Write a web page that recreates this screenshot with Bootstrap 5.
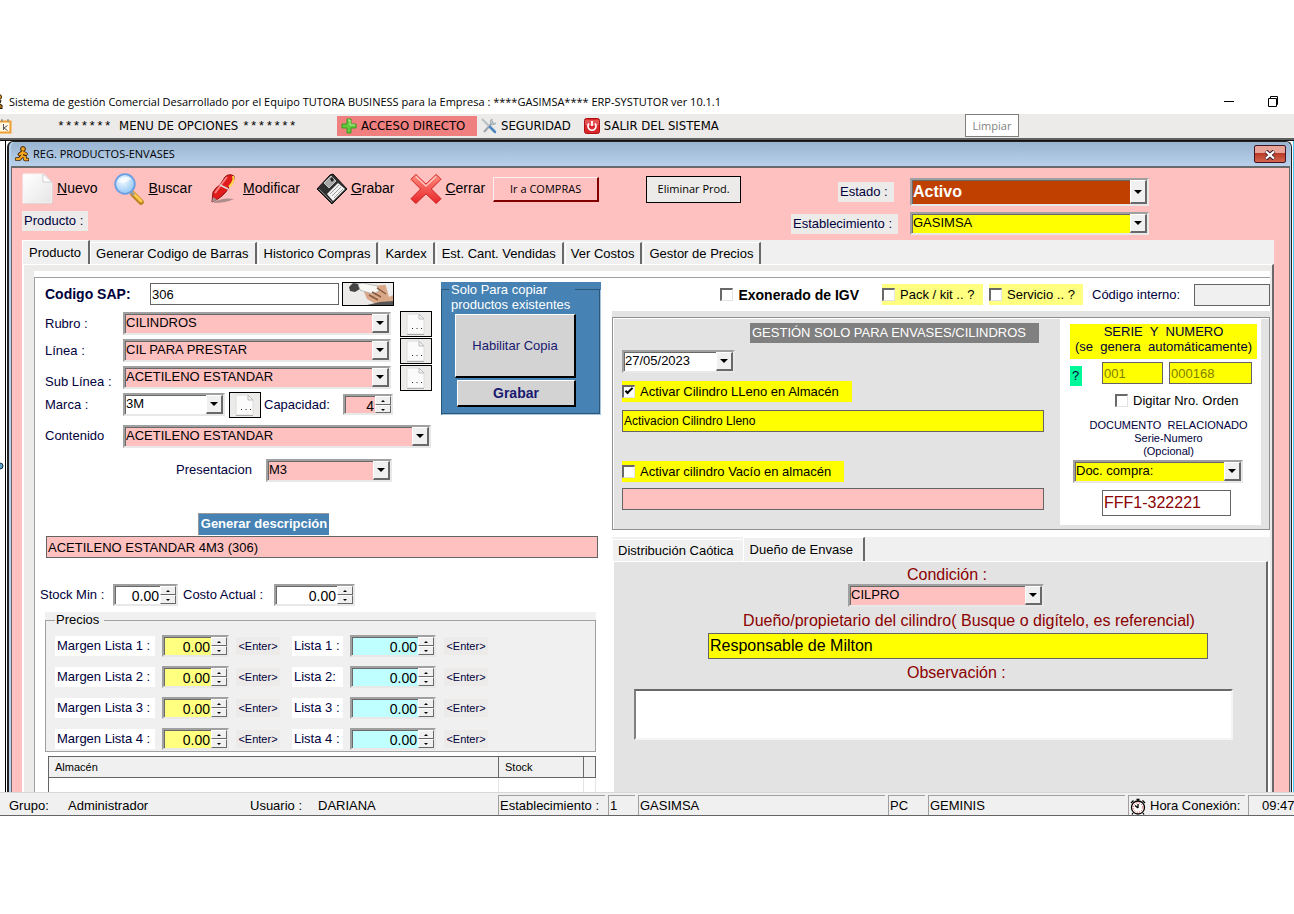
<!DOCTYPE html>
<html lang="es">
<head>
<meta charset="utf-8">
<meta name="viewport" content="width=device-width, initial-scale=1">
<title>ERP-SYSTUTOR - REG. PRODUCTOS-ENVASES</title>
<link href="https://cdn.jsdelivr.net/npm/bootstrap@5.3.0/dist/css/bootstrap.min.css" rel="stylesheet">
<style>
:root{--rosa:#ffc0c0;--gris:#f0f0f0;--plomo:#e3e3e3;--azul:#4682b4;--tinta:#00003c}
body{font:13px/20px "Liberation Sans",Arial,sans-serif;color:#000;background:#fff;padding-top:92px;overflow-x:hidden}
label,.lbl{color:var(--tinta);white-space:nowrap}
button,input,select,textarea{font:inherit;color:inherit;border-radius:0}
.f11{font-size:11px}.f12{font-size:12px}.f14{font-size:14px}.f16{font-size:16px}
.bg-rosa{background-color:var(--rosa)!important}
.bg-am{background-color:#ff0!important}
.bg-amc{background-color:#ffff80!important}
.bg-cel{background-color:#c0ffff!important}
.bg-ladrillo{background-color:#c04000!important}
.rojo,.rojo label{color:#8b0000}

/* application title and menu */
.ui{font-family:"Open Sans","Segoe UI",sans-serif;font-size:11px}
.titlebar{height:20px;line-height:20px}
.appicon{margin-left:-3px}
.menubar{height:26px;background:#ecebe9;border-bottom:2px solid #606060;margin-top:2px;font:13px/24px "DejaVu Sans Condensed",Tahoma,sans-serif}
.menubar a{color:#000;text-decoration:none;white-space:nowrap;height:24px}
.menuicon{margin-right:45px}
.opciones{width:280px}
.opciones span{font-family:"Liberation Mono",monospace}
.acceso{background:#f08080;width:140px;padding-left:4px;border:solid #ecebe9;border-width:2px 0}
.salir{margin-left:13px}
.limpiar{position:absolute;right:275px;top:0;width:54px;height:23px;line-height:20px;border:1px solid #7f7f7f;background:#fff;color:#838383;padding:0}

/* MDI window */
.mdi{border-top:1px solid #111;box-shadow:inset -1px 0 #45c8f5}
.strip{width:6px;border-right:1px solid #000}
.win{margin:0 2px 0 1px;border:solid #222;border-width:1px 1px 0 2px;border-radius:6px 6px 0 0;background:#b9d1ea;padding:0 1px 0 2px}
.caption{height:24px;background:linear-gradient(#99b4d1,#b9d1ea);line-height:24px;border-radius:5px 5px 0 0}
.closer{width:32px;height:18px;border:1px solid #431422;border-radius:2px;background:linear-gradient(#e9a49a 0 45%,#b83a26 46%,#d4664f);padding:0;line-height:1}
.body-win{background:var(--rosa);border:solid #696969;border-width:2px 1px 0 1px;padding:0 8px 0 10px}
.head{height:72px;padding-right:132px}
.bar{padding-top:2px;height:40px}
.tool{border:0;background:none;padding:0;font-size:14px;height:34px}
.tool svg{margin-right:3px}
.tool+.tool{margin-left:16px}
.compras{width:106px;height:25px;background:var(--rosa);border:solid;border-width:1px 2px 2px 1px;border-color:#fff0f0 #800000 #800000 #fff0f0;padding:0;line-height:16px;margin-left:8px}
.eliminar{width:95px;height:27px;border:1px solid #000;background:#ecebe9;padding:0;margin-left:47px}
.chip{background:#ecebe9;height:20px;line-height:19px;padding:0 2px;white-space:nowrap;display:inline-block}
.prod{margin-top:3px;width:66px}
.estado{display:grid;grid-template-columns:107px 239px;column-gap:12px;row-gap:6px;align-content:start;padding-top:10px;align-items:center}
.e1{justify-self:end;width:56px;margin-right:4px}

/* sunken fields, combos and spinners */
.deep{position:relative;border:2px solid;border-color:#a0a0a0 #e8e8e8 #e8e8e8 #a0a0a0;height:23px;background:#fff;box-shadow:inset 1px 1px #696969;display:block}
.deep select,.deep input{appearance:none;border:0;background:transparent;width:100%;height:100%;padding:0 18px 1px 1px;display:block;outline:0;line-height:16px}
.deep input{text-align:right;padding:2px 17px 0 0;font-size:14px}
.big{height:28px}
.drop{position:absolute;right:0;top:0;bottom:0;width:17px;background:var(--gris);border:solid;border-width:1px 2px 2px 1px;border-color:#fff #696969 #696969 #fff;pointer-events:none}
.drop::before{content:"";position:absolute;left:3px;top:calc(50% - 2px);border:solid transparent;border-width:4px 4px 0;border-top-color:#000}
.spin{position:absolute;right:0;top:0;bottom:0;width:16px;display:flex;flex-direction:column}
.spin button{flex:1;padding:0;background:var(--gris);border:1px solid;border-color:#fff #696969 #696969 #fff;position:relative;min-height:0}
.spin button::before{content:"";position:absolute;left:5px;top:3px;border:solid transparent;border-width:0 2px 2px;border-bottom-color:#000}
.spin button+button::before{border-width:2px 2px 0;border-top-color:#000}
.flat{border:1px solid #646464;height:22px;padding:0 1px;outline:0;line-height:18px;background:#fff}
input.ck{appearance:none;width:13px;height:13px;flex:none;background:#fff;border:solid;border-width:2px 1px 1px 2px;border-color:#696969 #e3e3e3 #e3e3e3 #696969;position:relative}
.ck:checked::after{content:"";position:absolute;left:1px;top:1px;width:8px;height:4px;border:solid #000;border-width:0 0 2px 2px;transform:rotate(-45deg)}
.opt{height:21px;display:inline-flex;align-items:center;gap:5px;color:#000}

/* tabs */
.outer{margin-right:7px}
.tabs{background:var(--gris);height:24px;align-items:flex-end}
.tabs button{border:0;background:var(--gris);height:22px;line-height:20px;padding:0 6px 0 5px;white-space:nowrap;border-left:1px solid #fff;border-top:1px solid #fff;border-right:2px solid #696969;margin-right:1px}
.tabs button.on{height:24px;padding:0 7px 0 6px;margin-right:0;line-height:20px}
.tabs2{margin-top:7px}
.tabs2 button:first-child{border-right:0;padding-right:8px}
.tabs2 button.on{padding-right:10px}
.tabpage{background:#ecebe9;border-left:2px solid #fff;border-right:2px solid #696969;border-top:1px solid #fff;padding:6px 2px 0 10px}
.sheet{background:#fff;padding-top:6px}
.framed{border-top:1px solid #a0a0a0;border-left:1px solid #a0a0a0}

/* left column: product data */
.colA{width:566px;flex:none}
.frm{width:397px;padding-left:10px}
.r27{height:27px}.r32{height:32px}.r36{height:36px;width:386px}
.w-lab{width:78px;flex:none}
.wsap{width:105px;flex:none}.wcod{width:189px}
.wmar{width:102px;flex:none}.wcap{width:82px;padding-left:3px;flex:none}.wcapn{width:50px;height:21px}
.wpre{width:221px;padding-left:131px;flex:none}.wpres{width:126px}
.scan{width:52px;height:24px;border:1px solid #000;background:#ecebe9;padding:0;line-height:0;margin-left:3px}
.pg{width:32px;height:26px;border:1px solid #000;background:#ecebe9;padding:0;line-height:0;margin-left:9px;flex:none}
.copia{width:160px;height:133px;background:var(--azul);color:#fff;margin:4px 0 0 9px;padding:7px 1px 0 0}
.copia fieldset{border:1px solid #2b5678;box-shadow:1px 1px #a9c6e0;height:125px;padding:0 0 0 13px}
.copia legend{float:left;font-size:13px;line-height:15px;width:126px;margin:-8px 0 2px -6px;padding:0 0 0 2px;background:var(--azul);white-space:nowrap}
.copia button{background:#d3d3d3;border:solid;border-width:1px 2px 2px 1px;border-color:#fff #000 #000 #fff;color:#191970;display:block;padding:0;clear:both}
.copia .hab{width:121px;height:64px}
.copia .gra{width:119px;height:27px;margin:2px 0 0 2px;font-weight:700;font-size:14px}
.desc{padding:27px 3px 0 11px}
.gendesc{display:block;margin:0 0 1px 152px;width:131px;height:22px;border:solid #9a9a9a;border-width:1px 0 0 1px;background:var(--azul);color:#fff;font-weight:700;line-height:17px;padding:0 0 3px;white-space:nowrap}
.stock{padding:26px 0 0 5px}.stock .deep{height:22px}
.wst{width:73px}.wsn{width:65px}.wca{width:96px;padding-left:5px}.wcn{width:81px}
.precios{background:var(--gris);width:551px;margin:6px 0 0 10px}
.precios fieldset{border:1px solid #a0a0a0;padding:0 9px;height:140px}
.precios legend{float:none;width:auto;font-size:13px;line-height:16px;margin:0 0 7px;padding:0 5px 0 1px}
.plist>div{margin-bottom:9px;height:22px}.plist .deep{height:22px;flex:none}
.tag{background:#fff;height:20px;padding-left:2px;flex:none}
.ent{width:44px;height:18px;background:#ecebe9;border:0;color:var(--tinta);line-height:16px;padding:0}
.wm{width:100px;margin-right:7px}.wn{width:67px}.ea{margin:0 12px 0 7px}.wl{width:51px;margin-right:7px}.wc{width:86px}.eb{margin-left:8px}
.grilla{width:548px;margin:4px 0 0 13px;border:solid #646464;border-width:1px 1px 0;font:11px/20px "Liberation Sans",Arial,sans-serif;border-collapse:collapse;table-layout:fixed}
.grilla th{background:var(--gris);font-weight:400;border-right:1px solid #696969;border-bottom:1px solid #646464;padding:0 6px;height:19px}
.grilla td{height:14px;border-right:1px solid #e4e4e4;padding:0}
.c1{width:450px}.c2{width:85px}

/* right column: cylinders */
.colB{padding-left:11px}
.toprow{height:33px}
.exo{margin-right:23px}.pak{width:101px;margin-right:6px}.srv{width:94px;margin-right:9px}.cin{width:102px}.wint{width:76px;background:var(--gris)}
.gbox{background:var(--plomo);padding-top:6px}
.rim{border:1px solid #909090;box-shadow:inset 1px 1px #fff;padding:0 8px 4px 9px}
.izq{padding:5px 16px 0 0}
.gestion{background:#808080;color:#fff;line-height:19px;height:20px;width:289px;padding-left:2px;white-space:nowrap;margin-right:5px}
.fecha{width:113px;margin:7px 0 8px}.act{width:230px}.vac{width:222px}.t1{margin:6px 0 29px}.t2{margin-top:4px}
.serie{background:#fff;width:201px;height:207px;padding:6px 4px 0 10px}
.syn{height:35px;line-height:15px}.sn{padding-top:3px}
.qm{width:12px;height:20px;background:#00fa9a;margin:4px 20px 0 0;padding-left:2px}
.s1{width:61px;margin-right:6px;color:#808000}.s2{width:83px;color:#808000}
.dig{margin:4px 0 0 45px}.dr{line-height:13px;margin:6px 0 2px 10px}.docs{width:170px;margin-left:3px}.fff{width:129px;height:26px;margin:7px 0 0 32px}
.dueno{background:var(--plomo);border:solid;border-width:1px 2px 0;border-color:#fff #696969 #fff #fff;margin-right:2px}
.lc{padding:4px 0 0 293px;line-height:18px}.cond{width:196px;margin-left:234px;font-size:13px}
.ld{padding:3px 0 0 58px;line-height:22px}.due{width:500px;height:26px;margin:1px 0 0 94px;display:block}
.lo{padding:4px 0 0 293px}
.obs{width:599px;height:51px;margin:6px 0 0 20px;border:2px solid;border-color:#696969 #f4f4f4 #f4f4f4 #808080;display:block;background:#fff;resize:none;outline:0;padding:2px}

/* status bar */
.status{background:var(--gris);border-top:1px solid #d8d8d8;border-bottom:1px solid #646464;height:24px;line-height:19px;white-space:nowrap;overflow:hidden}
.status>span{margin-top:3px}
.status .cell{border:solid #a0a0a0;border-width:1px 0 0 1px;height:20px;padding-left:1px;margin:2px 3px 0 0;flex:none}
.s-a{padding-left:9px;width:68px}.s-b{width:182px}.s-c{width:68px}
.k1{width:107px}.k2{width:27px}.k3{width:247px}.k4{width:37px}.k5{width:197px}.k6{width:117px}
.status .k7{width:46px;padding-left:13px;margin-right:0}
</style>
</head>
<body>
<svg width="0" height="0" class="position-absolute" aria-hidden="true">
<defs>
<linearGradient id="gp" x1="0" y1="0" x2="1" y2="1"><stop offset="0" stop-color="#fff"/><stop offset="1" stop-color="#e6e6e6"/></linearGradient>
<radialGradient id="gl" cx=".4" cy=".35" r=".7"><stop offset="0" stop-color="#f2faff"/><stop offset="1" stop-color="#8fc4f4"/></radialGradient>
<linearGradient id="gr" x1="0" y1="0" x2="0" y2="1"><stop offset="0" stop-color="#ff8a7c"/><stop offset="1" stop-color="#e8252a"/></linearGradient>
<symbol id="runner" viewBox="0 0 14 16"><g stroke="#3a1c00" stroke-width="3.600" fill="none" stroke-linecap="round" stroke-linejoin="round"><path d="M7.500 6L7 10L10 11V13.500H12.500M7 10L4.500 13H1.500M7 6.500L4.500 8.500M8 6.500L11 8"/></g><circle cx="8" cy="3" r="2.400" fill="#f5a623" stroke="#3a1c00"/><g stroke="#f5a623" stroke-width="2" fill="none" stroke-linecap="round" stroke-linejoin="round"><path d="M7.500 6L7 10L10 11V13.500H12.500M7 10L4.500 13H1.500M7 6.500L4.500 8.500M8 6.500L11 8"/></g></symbol>
<symbol id="hoja" viewBox="0 0 32 32"><path d="M2 2H23L31 10V31H2Z" fill="#b9a4a4" opacity=".6"/><path d="M1 1H22L30 9V30H1Z" fill="url(#gp)" stroke="#f5f5f5"/><path d="M21 1V9H30Z" fill="#fff" stroke="#d0d0d0"/></symbol>
<symbol id="mini" viewBox="0 0 30 24"><path d="M6 2H18L23 7V22H6Z" fill="#fbfbfb" stroke="#dcdcdc"/><path d="M18 2V7H23Z" fill="#f3f3f3" stroke="#bdbdbd"/><path d="M6 22.500H23" stroke="#aaa"/><path d="M11 16.500H12M15.500 16.500H16.500M20 16.500H21" stroke="#3a2a1a"/></symbol>
</defs>
</svg>

<header class="titlebar ui d-flex align-items-center">
  <svg width="8" height="16" viewBox="6 0 8 16" class="appicon me-1 flex-shrink-0"><path d="M5 6L10 8M6 10L10 12V15" fill="none" stroke="#2a1a00" stroke-width="3"/><path d="M5 6L9 8M6 10L10 12V14" fill="none" stroke="#f5a623"/><circle cx="8" cy="3" r="2.500" fill="#f5a623" stroke="#2a1a00"/></svg>
  <span class="text-nowrap">Sistema de gestión Comercial Desarrollado por el Equipo TUTORA BUSINESS para la Empresa : ****GASIMSA**** ERP-SYSTUTOR ver 10.1.1</span>
  <svg class="ms-auto me-3 flex-shrink-0" width="56" height="14" viewBox="0 0 56 14" fill="none" stroke="#000"><path d="M2 6.500H12"/><path d="M46.500 3.500H54.500V11.500H46.500ZM48.500 3V1.500H55.500V9.500H55"/></svg>
</header>

<nav class="menubar d-flex align-items-start position-relative">
  <svg width="12" height="16" viewBox="0 0 12 16" class="menuicon mt-1 flex-shrink-0"><path d="M-3 3.500H10.500V14.500H-3Z" fill="#fff7e0" stroke="#f0a030" stroke-width="2"/><path d="M3.500 6V12M7.500 7.500L4 10L7.500 12.500" fill="none" stroke="#556"/><path d="M2 1V4M8 1V4" stroke="#777"/></svg>
  <a href="#" class="opciones"><span>*******</span>&nbsp; MENU DE OPCIONES <span>*******</span></a>
  <a href="#" class="acceso d-flex align-items-center flex-shrink-0"><svg width="16" height="16" viewBox="0 0 16 16" class="me-1"><path d="M6 1H10V6H15V10H10V15H6V10H1V6H6Z" fill="#62c83c" stroke="#3b9a20"/><path d="M7 2H9V7H14" fill="none" stroke="#b6f29a"/></svg>ACCESO DIRECTO</a>
  <a href="#" class="d-flex align-items-center ms-1"><svg width="16" height="16" viewBox="0 0 16 16" class="me-1"><path d="M3 14L12 4" stroke="#9aa4ad" stroke-width="2"/><path d="M11 1A3 3 0 1 0 15 5L12.500 5.500L11 4Z" fill="#c8d0d6" stroke="#8b959c" stroke-width=".6"/><path d="M1 1L8 8" stroke="#b8c0c6" stroke-width="2"/><path d="M9 9L14 14" stroke="#4a86c0" stroke-width="2.500" stroke-linecap="round"/></svg>SEGURIDAD</a>
  <a href="#" class="salir d-flex align-items-center"><svg width="16" height="16" viewBox="0 0 16 16" class="me-1"><rect x=".5" y=".5" width="15" height="15" rx="2" fill="#d9262b" stroke="#b01015"/><path d="M1 2H15V7Q8 9 1 7Z" fill="#f08080" opacity=".5"/><path d="M5 5.500A4 4 0 1 0 11 5.500M8 3V8" fill="none" stroke="#fff" stroke-width="1.800"/></svg>SALIR DEL SISTEMA</a>
  <button class="limpiar ui">Limpiar</button>
</nav>

<div class="mdi d-flex">
  <div class="strip flex-shrink-0 d-flex align-items-center"><svg width="4" height="8" viewBox="0 0 4 8"><circle cx="0" cy="4" r="3" fill="#5aa0c8" stroke="#134"/></svg></div>
  <main class="win flex-grow-1">
    <div class="caption ui d-flex align-items-center">
      <svg width="14" height="16" class="ms-1 me-1"><use href="#runner"/></svg>
      <span class="text-nowrap">REG. PRODUCTOS-ENVASES</span>
      <button class="closer ms-auto me-1" aria-label="Cerrar ventana"><svg width="12" height="10" viewBox="0 0 12 10"><path d="M2 1L10 9M10 1L2 9" stroke="#402030" stroke-width="4"/><path d="M2 1.500L10 8.500M10 1.500L2 8.500" stroke="#fff" stroke-width="2.200"/></svg></button>
    </div>
    <div class="body-win">
      <div class="head d-flex">
        <div>
          <div class="bar d-flex align-items-center">
            <button class="tool"><svg width="32" height="32"><use href="#hoja"/></svg><u>N</u>uevo</button>
            <button class="tool"><svg width="32" height="32" viewBox="0 0 32 32"><path d="M20 21L28 29" stroke="#b98222" stroke-width="5.500" stroke-linecap="round"/><path d="M20 20L28 28" stroke="#ffc84a" stroke-width="3" stroke-linecap="round"/><path d="M17 18L21 22" stroke="#999" stroke-width="3"/><circle cx="12" cy="11" r="9.800" fill="url(#gl)" stroke="#6a9ee0" stroke-width="1.800"/><path d="M5 9A8 8 0 0 1 18 6Q12 11 5 9" fill="#fff" opacity=".7"/></svg><u>B</u>uscar</button>
            <button class="tool"><svg width="32" height="32" viewBox="0 0 32 32"><path d="M6 29Q15 24 26 26Q18 30 6 30Z" fill="#7a6a6a" opacity=".6"/><path d="M4 29L5 19Q8 14 12 12L17 4Q21 0 26 3Q27 9 21 14Q16 24 4 29Z" fill="#e01c1c" stroke="#8c0c0c"/><path d="M7 20Q12 13 19 4" fill="none" stroke="#ff8080" stroke-width="2"/><path d="M12 12L20 16" stroke="#ddd" stroke-width="1.500"/><path d="M25 3Q27 8 21 14" fill="none" stroke="#ffd84a" stroke-width="2"/><path d="M4 29L5 24L9 27Z" fill="#999"/></svg><u>M</u>odificar</button>
            <button class="tool"><svg width="32" height="32" viewBox="0 0 32 32"><path d="M1 16L14 2L17 1L31 16L16 31Z" fill="#303030" stroke="#111"/><path d="M11 21L22 10L29 16L17 28Z" fill="#f4f4f4"/><path d="M14 21L23 12M16 23L25 14M18 25L27 16" stroke="#999"/><path d="M8 10L15 3L20 8L13 15Z" fill="#a8a8a8" stroke="#ddd" stroke-width=".8"/><path d="M14 6L16 4L18 7L16 9Z" fill="#222"/><path d="M3 16L16 29" stroke="#888"/></svg><u>G</u>rabar</button>
            <button class="tool"><svg width="32" height="32" viewBox="0 0 33 32"><path d="M6 1L16.500 11L27 1L32 6L22 16L32 26L27 31L16.500 21L6 31L1 26L11 16L1 6Z" fill="url(#gr)" stroke="#c81e1e"/><path d="M6 3L16.500 13L27 3" fill="none" stroke="#ffc4be" stroke-width="1.500"/></svg><u>C</u>errar</button>
            <button class="compras ui">Ir a COMPRAS</button>
            <button class="eliminar ui">Eliminar Prod.</button>
          </div>
          <span class="lbl chip prod">Producto :</span>
        </div>
        <div class="estado ms-auto">
          <label for="est" class="chip e1">Estado :</label>
          <span class="deep big bg-ladrillo"><select id="est" class="fw-bold f16 text-white"><option>Activo</option></select><i class="drop"></i></span>
          <label for="estab" class="chip">Establecimiento :</label>
          <span class="deep bg-am"><select id="estab"><option>GASIMSA</option></select><i class="drop"></i></span>
        </div>
      </div>
      <div class="outer">
      <div class="tabs d-flex" role="tablist">
        <button class="on">Producto</button><button>Generar Codigo de Barras</button><button>Historico Compras</button><button>Kardex</button><button>Est. Cant. Vendidas</button><button>Ver Costos</button><button>Gestor de Precios</button>
      </div>
      <div class="tabpage">
        <div class="sheet"><div class="framed d-flex">
          <section class="colA">
            <div class="d-flex">
              <div class="frm">
                <div class="r32 d-flex align-items-center"><label for="sap" class="fw-bold f14 wsap">Codigo SAP:</label><input id="sap" class="flat wcod" value="306"><button class="scan" aria-label="Leer código"><svg width="50" height="22" viewBox="0 0 50 22"><path d="M21 9L31 3L50 1V18L40 20L31 20L24 16Z" fill="#d8a888"/><path d="M6 4L10 0L17 1V6L12 9L7 8Z" fill="#444"/><path d="M15 1L20 0L34 3L36 8L30 11L17 7Z" fill="#f8f8f4" stroke="#aaa" stroke-width=".7"/><path d="M29 9L38 14M26 12L35 17M34 5L43 11" stroke="#8a5a40" stroke-width="1.500"/><path d="M42 0H50V12L46 14Z" fill="#eee"/><path d="M24 22L37 19L50 18V22Z" fill="#555"/></svg></button></div>
                <div class="r27 d-flex align-items-center"><label for="rub" class="w-lab">Rubro :</label><span class="deep bg-rosa flex-grow-1"><select id="rub"><option>CILINDROS</option></select><i class="drop"></i></span><button class="pg" aria-label="Nuevo rubro"><svg width="30" height="24"><use href="#mini"/></svg></button></div>
                <div class="r27 d-flex align-items-center"><label for="lin" class="w-lab">Línea :</label><span class="deep bg-rosa flex-grow-1"><select id="lin"><option>CIL PARA PRESTAR</option></select><i class="drop"></i></span><button class="pg" aria-label="Nueva línea"><svg width="30" height="24"><use href="#mini"/></svg></button></div>
                <div class="r27 d-flex align-items-center"><label for="sub" class="w-lab pt-2">Sub Línea :</label><span class="deep bg-rosa flex-grow-1"><select id="sub"><option>ACETILENO ESTANDAR</option></select><i class="drop"></i></span><button class="pg" aria-label="Nueva sublínea"><svg width="30" height="24"><use href="#mini"/></svg></button></div>
                <div class="r27 d-flex align-items-center"><label for="mar" class="w-lab">Marca :</label><span class="deep wmar"><select id="mar"><option>3M</option></select><i class="drop"></i></span><button class="pg ms-1" aria-label="Nueva marca"><svg width="30" height="24"><use href="#mini"/></svg></button><label for="cap" class="wcap">Capacidad:</label><span class="deep bg-rosa wcapn"><input id="cap" value="4"><span class="spin"><button aria-label="Más"></button><button aria-label="Menos"></button></span></span></div>
                <div class="r36 d-flex align-items-center"><label for="con" class="w-lab">Contenido</label><span class="deep bg-rosa flex-grow-1"><select id="con"><option>ACETILENO ESTANDAR</option></select><i class="drop"></i></span></div>
                <div class="r32 d-flex align-items-center"><label for="pre" class="wpre">Presentacion</label><span class="deep bg-rosa wpres"><select id="pre"><option>M3</option></select><i class="drop"></i></span></div>
              </div>
              <div class="copia"><fieldset><legend>Solo Para copiar<br>productos existentes</legend><button class="hab">Habilitar Copia</button><button class="gra">Grabar</button></fieldset></div>
            </div>
            <div class="desc"><button class="gendesc">Generar descripción</button>
            <input class="flat bg-rosa w-100 d-block" aria-label="Descripción" value="ACETILENO ESTANDAR 4M3 (306)"></div>
            <div class="d-flex align-items-center stock"><label for="smin" class="wst">Stock Min :</label><span class="deep wsn"><input id="smin" value="0.00"><span class="spin"><button aria-label="Más"></button><button aria-label="Menos"></button></span></span><label for="cact" class="wca">Costo Actual :</label><span class="deep wcn"><input id="cact" value="0.00"><span class="spin"><button aria-label="Más"></button><button aria-label="Menos"></button></span></span></div>
            <div class="precios"><fieldset><legend>Precios</legend><div class="plist">
              <div class="d-flex align-items-center"><label for="m1" class="tag wm">Margen Lista 1 :</label><span class="deep bg-amc wn"><input id="m1" value="0.00"><span class="spin"><button aria-label="Más"></button><button aria-label="Menos"></button></span></span><button class="ent f11 ea">&lt;Enter&gt;</button><label for="l1" class="tag wl">Lista 1 :</label><span class="deep bg-cel wc"><input id="l1" value="0.00"><span class="spin"><button aria-label="Más"></button><button aria-label="Menos"></button></span></span><button class="ent f11 eb">&lt;Enter&gt;</button></div>
              <div class="d-flex align-items-center"><label for="m2" class="tag wm">Margen Lista 2 :</label><span class="deep bg-amc wn"><input id="m2" value="0.00"><span class="spin"><button aria-label="Más"></button><button aria-label="Menos"></button></span></span><button class="ent f11 ea">&lt;Enter&gt;</button><label for="l2" class="tag wl">Lista 2:</label><span class="deep bg-cel wc"><input id="l2" value="0.00"><span class="spin"><button aria-label="Más"></button><button aria-label="Menos"></button></span></span><button class="ent f11 eb">&lt;Enter&gt;</button></div>
              <div class="d-flex align-items-center"><label for="m3" class="tag wm">Margen Lista 3 :</label><span class="deep bg-amc wn"><input id="m3" value="0.00"><span class="spin"><button aria-label="Más"></button><button aria-label="Menos"></button></span></span><button class="ent f11 ea">&lt;Enter&gt;</button><label for="l3" class="tag wl">Lista 3 :</label><span class="deep bg-cel wc"><input id="l3" value="0.00"><span class="spin"><button aria-label="Más"></button><button aria-label="Menos"></button></span></span><button class="ent f11 eb">&lt;Enter&gt;</button></div>
              <div class="d-flex align-items-center"><label for="m4" class="tag wm">Margen Lista 4 :</label><span class="deep bg-amc wn"><input id="m4" value="0.00"><span class="spin"><button aria-label="Más"></button><button aria-label="Menos"></button></span></span><button class="ent f11 ea">&lt;Enter&gt;</button><label for="l4" class="tag wl">Lista 4 :</label><span class="deep bg-cel wc"><input id="l4" value="0.00"><span class="spin"><button aria-label="Más"></button><button aria-label="Menos"></button></span></span><button class="ent f11 eb">&lt;Enter&gt;</button></div>
            </div></fieldset></div>
            <table class="grilla"><colgroup><col class="c1"><col class="c2"><col></colgroup><thead><tr><th>Almacén</th><th>Stock</th><th></th></tr></thead><tbody><tr><td></td><td></td><td></td></tr></tbody></table>
          </section>

          <section class="colB flex-grow-1 d-flex flex-column">
            <div class="d-flex align-items-center justify-content-end toprow">
              <label class="opt fw-bold f14 exo"><input type="checkbox" class="ck">Exonerado de IGV</label>
              <label class="opt bg-amc pak"><input type="checkbox" class="ck">Pack / kit .. ?</label>
              <label class="opt bg-amc srv"><input type="checkbox" class="ck">Servicio .. ?</label>
              <label for="cint" class="cin">Código interno:</label><input id="cint" class="flat wint">
            </div>
            <div class="gbox"><div class="rim d-flex">
              <div class="flex-grow-1 izq">
                <div class="gestion ms-auto">GESTIÓN SOLO PARA ENVASES/CILINDROS</div>
                <span class="deep fecha"><select aria-label="Fecha"><option>27/05/2023</option></select><i class="drop"></i></span>
                <div><label class="opt bg-am act"><input type="checkbox" class="ck" checked>Activar Cilindro LLeno en Almacén</label></div>
                <input class="flat bg-am w-100 d-block f12 t1" aria-label="Detalle lleno" value="Activacion Cilindro Lleno">
                <div><label class="opt bg-am vac"><input type="checkbox" class="ck">Activar cilindro Vacío en almacén</label></div>
                <input class="flat bg-rosa w-100 d-block t2" aria-label="Detalle vacío">
              </div>
              <div class="serie flex-shrink-0">
                <div class="bg-am text-center lbl syn">SERIE&nbsp; Y&nbsp; NUMERO<br>(se&nbsp; genera&nbsp; automáticamente)</div>
                <div class="d-flex sn"><a href="#" class="qm lbl text-decoration-none">?</a><input class="flat bg-am s1" aria-label="Serie" value="001"><input class="flat bg-am s2" aria-label="Número" value="000168"></div>
                <label class="opt dig"><input type="checkbox" class="ck">Digitar Nro. Orden</label>
                <label for="doc" class="d-block text-center f11 dr">DOCUMENTO&nbsp; RELACIONADO<br>Serie-Numero<br>(Opcional)</label>
                <span class="deep bg-am docs"><select id="doc"><option>Doc. compra:</option></select><i class="drop"></i></span>
                <input class="flat fff f16 rojo" aria-label="Documento" value="FFF1-322221">
              </div>
            </div></div>
            <div class="tabs d-flex tabs2"><button>Distribución Caótica</button><button class="on">Dueño de Envase</button></div>
            <div class="dueno flex-grow-1 rojo f16">
              <label for="cond" class="d-block lc">Condición :</label>
              <span class="deep bg-rosa cond text-black"><select id="cond"><option>CILPRO</option></select><i class="drop"></i></span>
              <label for="due" class="d-block text-center ld">Dueño/propietario del cilindro( Busque o digítelo, es referencial)</label>
              <input id="due" class="flat bg-am due text-black" value="Responsable de Milton">
              <label for="obs" class="d-block lo">Observación :</label>
              <textarea id="obs" class="obs"></textarea>
            </div>
          </section>
        </div></div>
      </div>
      </div>
    </div>
  </main>
</div>

<footer class="status d-flex">
  <span class="s-a">Grupo:</span><span class="s-b">Administrador</span><span class="s-c">Usuario :</span><span class="flex-grow-1">DARIANA</span>
  <span class="cell k1">Establecimiento :</span><span class="cell k2">1</span><span class="cell k3">GASIMSA</span><span class="cell k4">PC</span><span class="cell k5">GEMINIS</span>
  <span class="cell k6"><svg width="16" height="17" viewBox="0 0 16 17" class="me-1"><circle cx="8" cy="9.500" r="6.500" fill="#fff" stroke="#000" stroke-width="1.300"/><circle cx="8" cy="9.500" r="4.700" fill="none" stroke="#e02020" stroke-dasharray="1 1.500"/><path d="M8 10V6M8 10L5 7.500M6.500 1.500H9.500M8 1V3M1 5L3.500 2.500M15 5L12.500 2.500M3 15L2 16.500M13 15L14 16.500" fill="none" stroke="#000" stroke-width="1.300"/></svg>Hora Conexión:</span><span class="cell k7">09:47</span>
</footer>
<script src="https://cdn.jsdelivr.net/npm/bootstrap@5.3.0/dist/js/bootstrap.bundle.min.js"></script>
</body>
</html>
